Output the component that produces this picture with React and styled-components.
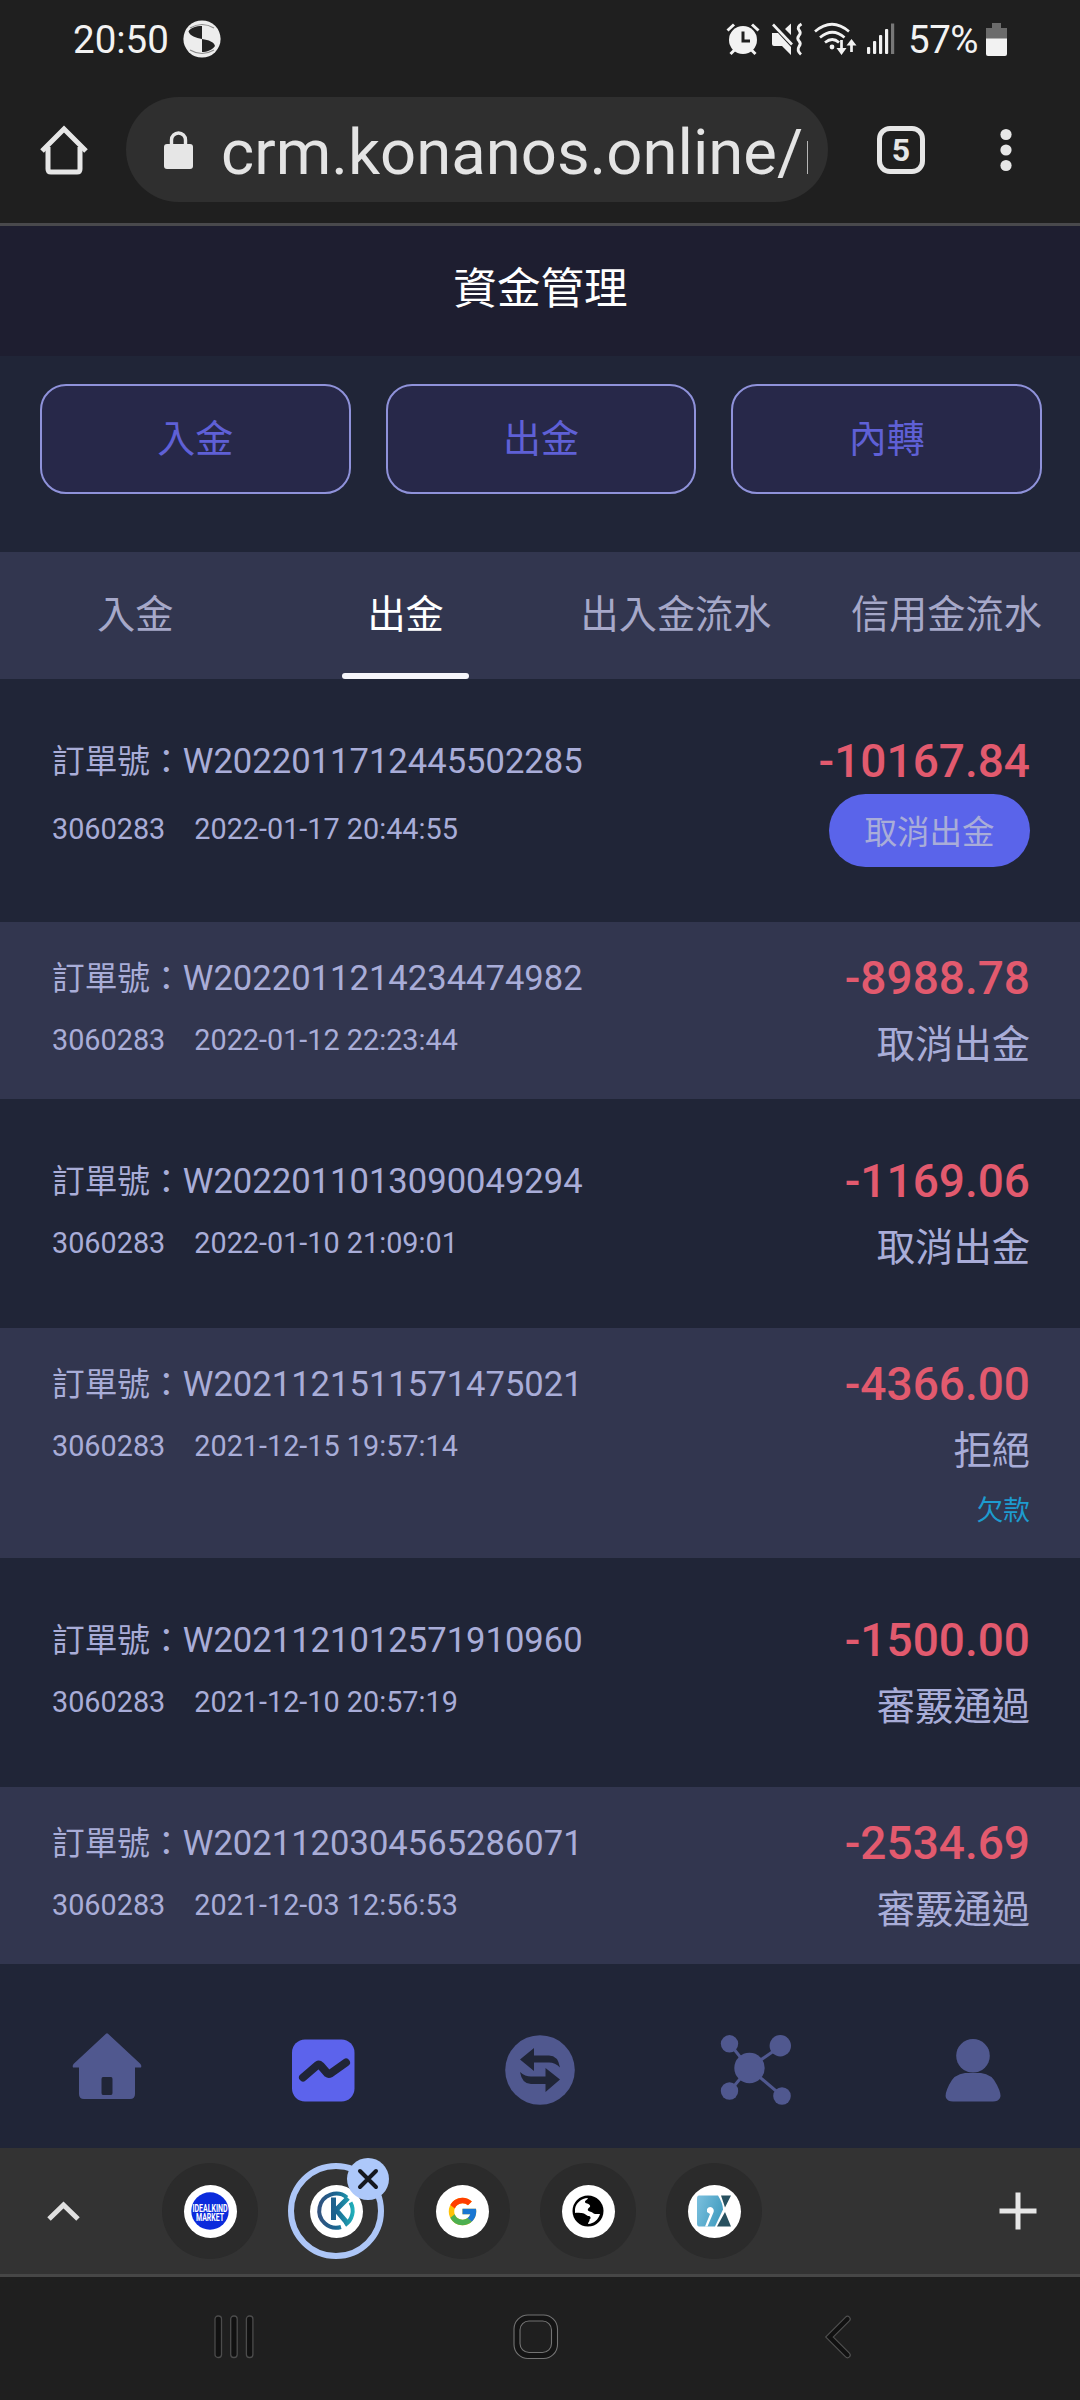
import React, { useState } from 'react'
import styled, { createGlobalStyle } from 'styled-components'
import { FcGoogle } from 'react-icons/fc'

const GlobalStyle = createGlobalStyle`
    * {
        box-sizing: border-box;
    }
    body {
        margin: 0;
        background-color: #1f1f1f;
        font-family: Roboto, 'Noto Sans CJK TC', sans-serif;
    }
    button {
        font-family: inherit;
        padding: 0;
        border: none;
        background: none;
        cursor: pointer;
    }
    svg {
        display: block;
        flex: none;
        overflow: visible;
    }
`

const Screen = styled.div`
    width: 1080px;
    height: 2400px;
    display: flex;
    flex-direction: column;
    overflow: hidden;
    background-color: #202537;
`

/* ---------- phone and browser bars ---------- */

const StatusBar = styled.div`
    height: 78px;
    padding: 0 73px;
    display: flex;
    align-items: center;
    justify-content: space-between;
    background-color: #1f1f1f;
    color: #f2f2f2;
    font-size: 38.5px;
    line-height: 78px;
`

const StatusGroup = styled.div`
    display: flex;
    align-items: center;
    gap: ${(props) => props.$gap || 0}px;
`

const Clock = styled.span`
    width: 110px;
    padding-top: 1px;
`

const Percent = styled.span`
    margin: 0 -3px 0 3px;
    width: 71px;
    padding-top: 1px;
    letter-spacing: -0.5px;
`

const AddressBar = styled.div`
    height: 148px;
    padding: 0 0 2px 40px;
    display: flex;
    align-items: center;
    background-color: #1f1f1f;
    border-bottom: 3px solid #49494c;
`

const UrlPill = styled.div`
    width: 702px;
    height: 105px;
    margin: 0 49px 0 38px;
    padding: 0 20px 0 38px;
    border-radius: 53px;
    display: flex;
    align-items: center;
    background-color: #2f2f2f;
`

const Url = styled.span`
    flex: 1;
    margin-left: 28px;
    overflow: hidden;
    white-space: nowrap;
    color: #e4e4e4;
    font-size: 63.4px;
    line-height: 101px;
    padding-top: 6px;
`

const TabCount = styled.button`
    width: 48px;
    height: 48px;
    margin-right: 75px;
    border: 5px solid #e6e6e6;
    border-radius: 13px;
    color: #e6e6e6;
    font-size: 32px;
    font-weight: 700;
    line-height: 38px;
`

/* ---------- page ---------- */

const Header = styled.header`
    height: 130px;
    display: flex;
    align-items: center;
    justify-content: center;
    background-color: #1e1e30;
    color: #ffffff;
    font-size: 43.6px;
    line-height: 60px;
    padding: 0 0 3px 1px;
`

const Actions = styled.div`
    height: 196px;
    padding: 28px 38px 0 40px;
    display: grid;
    grid-template-columns: repeat(3, 1fr);
    column-gap: 35px;
    align-items: start;
`

const ActionButton = styled.button`
    height: 110px;
    border: 2px solid #8f92da;
    border-radius: 26px;
    background-color: #272849;
    color: #5f60d6;
    font-size: 38px;
    line-height: 105px;
`

const Tabs = styled.nav`
    height: 127px;
    display: grid;
    grid-template-columns: repeat(4, 270.4px);
    background-color: #32364f;
`

const Tab = styled.button`
    display: flex;
    flex-direction: column;
    align-items: center;
    color: ${(props) => (props.$active ? '#ffffff' : '#a6a8c9')};
    font-size: 38.2px;
    line-height: 120px;
    padding-top: 3px;

    &::after {
        content: '';
        width: 127px;
        height: 6px;
        margin-top: -2px;
        border-radius: 3px;
        background-color: ${(props) => (props.$active ? '#f6f6fb' : 'transparent')};
    }
`

const Records = styled.ul`
    list-style: none;
    margin: 0;
    padding: 0;
`

const Record = styled.li`
    padding: 29px 50px 29px 52px;
    color: #a9add8;

    &:nth-child(odd) {
        padding-top: 55px;
        padding-bottom: 55px;
    }
    &:nth-child(even) {
        background-color: #32364f;
    }
`

const Line = styled.div`
    display: flex;
    align-items: center;
    justify-content: space-between;
    height: ${(props) => props.$height}px;
    margin-bottom: ${(props) => props.$gap || 0}px;
`

const OrderNo = styled.span`
    font-size: 34.6px;
    line-height: 50px;
`

const Label = styled.span`
    font-size: 32.7px;
`

const Amount = styled.span`
    color: #e25a6e;
    font-size: 46px;
    font-weight: 500;
    line-height: 50px;
`

const Meta = styled.span`
    display: flex;
    gap: 29px;
    font-size: 28.8px;
    line-height: 40px;
    padding-bottom: ${(props) => (props.$pending ? 3 : 1)}px;
`

const Status = styled.span`
    padding-top: 8px;
    font-size: 38.3px;
    line-height: 50px;
`

const CancelButton = styled.button`
    width: 201px;
    height: 73px;
    border-radius: 37px;
    background-color: #5a64ea;
    color: #a9add8;
    font-size: 32.5px;
    line-height: 77px;
    padding-top: 1px;
`

const Remark = styled.div`
    height: 53px;
    padding-top: 15px;
    text-align: right;
    color: #1d9bcf;
    font-size: 26.8px;
    line-height: 40px;
`

const BottomNav = styled.nav`
    height: 184px;
    padding: 29px 0;
    display: grid;
    grid-template-columns: repeat(5, 1fr);
    align-items: center;
    justify-items: center;
`

const NavButton = styled.button`
    color: ${(props) => (props.$active ? '#5c63ec' : '#50588f')};
    padding-top: 28px;
`

/* ---------- tab strip and system keys ---------- */

const TabStrip = styled.div`
    height: 129px;
    padding: 0 43px 0 46px;
    display: flex;
    align-items: center;
    background-color: #333333;
    border-bottom: 3px solid #474747;
`

const OpenTabs = styled.div`
    flex: 1;
    display: flex;
    gap: 30px;
    margin-left: 82px;
`

const OpenTab = styled.div`
    position: relative;
    width: 96px;
    height: 96px;
    border-radius: 50%;
    display: flex;
    align-items: center;
    justify-content: center;
    background-color: ${(props) => (props.$current ? 'transparent' : '#2b2b2b')};
    border: ${(props) => (props.$current ? '6px solid #adc6f7' : 'none')};
`

const Favicon = styled.span`
    width: 53px;
    height: 53px;
    border-radius: 50%;
    display: flex;
    align-items: center;
    justify-content: center;
    background-color: #ffffff;
`

const CloseBadge = styled.button`
    position: absolute;
    top: -11px;
    right: -11px;
    width: 42px;
    height: 42px;
    border-radius: 50%;
    display: flex;
    align-items: center;
    justify-content: center;
    background-color: #adc8fa;
`

const SystemKeys = styled.div`
    flex: 1;
    padding: 0 228px 3px 214px;
    display: flex;
    align-items: center;
    background-color: #1f1f1f;

    svg:nth-child(2) {
        margin: 0 auto 0 258px;
    }
`

/* ---------- icons ---------- */

const SwirlIcon = () => (
    <svg width='38' height='38' viewBox='0 0 38 38'>
        <circle cx='19' cy='19' r='18.6' fill='#ededed' />
        <path d='M19 6C13 6 7 8 5.5 11.500C7 16 13 18 19 19zM19 19C26 20 31 22 32 26C29 30 24 32 19 32z' fill='#222' />
        <path d='M7 30q12 7 24 0M31 8q-12-7-24 0' fill='none' stroke='#8b8b8b' strokeWidth='1.200' />
    </svg>
)

const AlarmIcon = () => (
    <svg width='34' height='34' viewBox='0 0 34 34' fill='none' stroke='#f2f2f2' strokeWidth='3'>
        <circle cx='17' cy='18' r='14' fill='#f2f2f2' stroke='none' />
        <path d='M1.500 8.500L8 2.500M32.500 8.500L26 2.500M4.500 32l4-4M29.500 32l-4-4' />
        <path d='M17 9.500v9.500h7' stroke='#1f1f1f' />
    </svg>
)

const MuteVibrateIcon = () => (
    <svg width='34' height='34' viewBox='-1 0 34 34'>
        <path d='M1 11h6l13 14v8l-9-9H3q-2 0-2-2zM20 1.500V13l-6-6z' fill='#f2f2f2' />
        <path d='M2 2.500l19 20' stroke='#f2f2f2' strokeWidth='2.600' />
        <path
            d='M30.500 2q-5 3-2.500 6t0 5.500q-2.500 3 0 5.500t0 5.500q-2.500 4 2 8'
            fill='none'
            stroke='#f2f2f2'
            strokeWidth='2.800'
        />
    </svg>
)

const WifiIcon = () => (
    <svg width='43' height='34' viewBox='0 0 43 34' fill='none' stroke='#f2f2f2' strokeWidth='2.700'>
        <path d='M1 9.500q17-14.500 34 0M6 15.500q12.500-10.500 24.500 0M11 20.500q7.500-6 14 0' />
        <circle cx='18' cy='25' r='2.400' fill='#f2f2f2' stroke='none' />
        <path d='M27.500 18v12M37.500 30V20' />
        <path d='M22.500 26h10l-5 7zM32.500 23.500h10l-5-6.500z' fill='#f2f2f2' stroke='none' />
    </svg>
)

const SignalIcon = () => (
    <svg width='28' height='32' viewBox='0 0 28 32' fill='#f2f2f2'>
        <rect x='0' y='24' width='3.200' height='7' rx='1' />
        <rect x='6' y='18' width='3.200' height='13' rx='1' />
        <rect x='12' y='12' width='3.200' height='19' rx='1' />
        <rect x='18' y='6' width='3.200' height='25' rx='1' />
        <rect x='24' y='0.500' width='3.200' height='30.500' fill='#777' />
    </svg>
)

const BatteryIcon = () => (
    <svg width='21' height='33' viewBox='0 0 21 33'>
        <path d='M6 0h9v5h6v11H0V5h6z' fill='#6b6b6b' />
        <path d='M0 15.500h21V31q0 2-2 2H2q-2 0-2-2z' fill='#f2f2f2' />
    </svg>
)

const HomeOutlineIcon = () => (
    <svg width='48' height='50' viewBox='0 0 48 50' fill='none' stroke='#e6e6e6' strokeWidth='5'>
        <path d='M2 26L24 4l22 22' strokeLinejoin='miter' />
        <path d='M8 22v22q0 3 3 3h26q3 0 3-3V22' />
    </svg>
)

const LockIcon = () => (
    <svg width='29' height='38' viewBox='0 0 29 38'>
        <rect x='0' y='13' width='29' height='25' rx='3' fill='#e6e6e6' />
        <path d='M7.500 15V9a7 7 0 0 1 14 0v6' fill='none' stroke='#e6e6e6' strokeWidth='3.400' />
    </svg>
)

const MoreIcon = () => (
    <svg width='12' height='44' viewBox='0 0 12 44' fill='#e6e6e6'>
        <circle cx='6' cy='6.500' r='5.600' />
        <circle cx='6' cy='22' r='5.600' />
        <circle cx='6' cy='37.500' r='5.600' />
    </svg>
)

const HouseIcon = () => (
    <svg width='70' height='70' viewBox='0 0 70 70' fill='currentColor'>
        <path
            fillRule='evenodd'
            d='M33 .8q1-1 2 0L67.500 31q1.500 2 .5 3.500h-6V61q0 5-5 5H11q-5 0-5-5V34.500H0q-1-1.500.500-3.500zM30 44q-1.500 0-1.500 2v14q0 2 1.500 2h8q1.500 0 1.500-2V46q0-2-1.500-2z'
            transform='translate(0 -2)'
        />
    </svg>
)

const ChartIcon = () => (
    <svg width='70' height='70' viewBox='0 0 70 70'>
        <rect x='3' y='4.500' width='62.500' height='62' rx='13' fill='currentColor' />
        <path
            d='M14 42.500L28.500 30q1.500-1 3 .5l7 8q1.200 1 3 0L57 27.500'
            fill='none'
            stroke='#202537'
            strokeWidth='8'
            strokeLinecap='round'
            strokeLinejoin='round'
        />
    </svg>
)

const SwapIcon = () => (
    <svg width='70' height='70' viewBox='0 0 70 70'>
        <circle cx='35' cy='35' r='34.800' fill='currentColor' />
        <path
            d='M15 24.500L29 13v7.500h15q9 0 11 12q-5-5-11-5H29V36zM55 44.500L40.500 57v-8H26q-9 0-11-12q5 4.500 11 4.500h14.500V33z'
            fill='#202537'
        />
    </svg>
)

const NodesIcon = () => (
    <svg width='70' height='70' viewBox='0 0 70 70' fill='currentColor'>
        <path d='M8.500 8.500L28 33L60 11M8.500 56.500L28 33l33 28' fill='none' stroke='currentColor' strokeWidth='3' />
        <circle cx='28.500' cy='33' r='15.200' />
        <circle cx='8.500' cy='8.800' r='8.700' />
        <circle cx='59.300' cy='10.800' r='10.700' />
        <circle cx='8.500' cy='56' r='8.700' />
        <circle cx='61' cy='61' r='8.800' />
    </svg>
)

const UserIcon = () => (
    <svg width='70' height='70' viewBox='-1 0 70 70' fill='currentColor'>
        <circle cx='35' cy='20.800' r='16.800' />
        <path d='M27 38h16q11 1 16 12q5 10 3 13q-2 3.500-7 3.500H15q-5 0-7-3.500q-1.500-4 3-13q5-11 16-12z' />
    </svg>
)

const IdealkindLogo = () => (
    <svg width='38' height='38' viewBox='0 0 38 38'>
        <circle cx='19' cy='19' r='18.700' fill='#0b2bdc' />
        <g fill='#fff' fontFamily='Roboto' fontWeight='700' fontSize='10' textAnchor='middle'>
            <text x='19' y='20' textLength='35' lengthAdjust='spacingAndGlyphs'>IDEALKIND</text>
            <text x='19' y='29' textLength='28' lengthAdjust='spacingAndGlyphs'>MARKET</text>
        </g>
    </svg>
)

const KonanosLogo = () => (
    <svg width='38' height='38' viewBox='0 0 38 38' fill='none' strokeWidth='4'>
        <defs>
            <linearGradient id='konanos' x1='0' y1='0' x2='38' y2='0' gradientUnits='userSpaceOnUse'>
                <stop offset='0' stopColor='#34507c' />
                <stop offset='0.500' stopColor='#1a6490' />
                <stop offset='1' stopColor='#20b5bd' />
            </linearGradient>
        </defs>
        <g stroke='url(#konanos)'>
            <path d='M30 5.500A17 17 0 1 0 24 35' />
            <path d='M33.500 10.500A17 17 0 0 1 28 33' />
            <path d='M16.500 5.500V28' strokeWidth='5' />
            <path d='M31 6L19 18L31 32' strokeWidth='5' />
        </g>
    </svg>
)

const GlobeLogo = () => (
    <svg width='32' height='32' viewBox='0 0 32 32'>
        <circle cx='16' cy='16' r='15.500' fill='#000' />
        <path
            d='M3 14C4 8 9 3.500 16 3c-1 2.500-3 2-3 4s4 1 5 3.500c1 2-3 2.500-2 5c1 1.500 4 1 5 2.500c2 2 4 .5 7 1c-2 6-6 9.500-12 10c0-2 2-2.500 1.500-4.500c2-1 1-3-.5-3.500c-3 0-4-3.500-8-3c-2 0-4-.5-6 0z'
            fill='#fff'
        />
    </svg>
)

const DxLogo = () => (
    <svg width='34' height='32' viewBox='0 0 34 32'>
        <defs>
            <linearGradient id='dx' x1='0' y1='0' x2='1' y2='0.400'>
                <stop offset='0' stopColor='#7cc0de' />
                <stop offset='1' stopColor='#459fc2' />
            </linearGradient>
        </defs>
        <path d='M2 0.500h19q5 8 5 14l-8 17H2q-2 0-2-3v-25q0-3 2-3z' fill='url(#dx)' />
        <path d='M10 14q2-3 5-1.500q3 2 1 6L10.500 31.500H8L13 19l-3-2z' fill='#fff' />
        <path d='M24 0.500h10l-6 12zM28 17l6 14.500H20z' fill='#27505f' />
    </svg>
)

const CloseIcon = () => (
    <svg width='20' height='20' viewBox='0 0 20 20' stroke='#14171f' strokeWidth='4' strokeLinecap='round'>
        <path d='M2 2l16 16M18 2L2 18' />
    </svg>
)

const ChevronUpIcon = () => (
    <svg width='34' height='22' viewBox='0 0 34 22'>
        <path d='M3 19L17.500 5L32 19' fill='none' stroke='#e0e0e0' strokeWidth='5' />
    </svg>
)

const PlusIcon = () => (
    <svg width='38' height='38' viewBox='0 0 38 38' stroke='#e6e6e6' strokeWidth='5'>
        <path d='M19 0.500v37M0.500 19h37' />
    </svg>
)

const RecentsIcon = () => (
    <svg width='41' height='44' viewBox='0 0 41 44' fill='#111' stroke='#4c4c4c' strokeWidth='1.300'>
        <rect x='1' y='1' width='6.500' height='41.500' rx='3' />
        <rect x='16.700' y='1' width='6.500' height='41.500' rx='3' />
        <rect x='32.400' y='1' width='6.500' height='41.500' rx='3' />
    </svg>
)

const HomeKeyIcon = () => (
    <svg width='46' height='46' viewBox='0 0 46 46' stroke='#737373' strokeWidth='1.100'>
        <rect x='1' y='1' width='43.500' height='43.500' rx='14' fill='#141414' />
        <rect x='7' y='7' width='31.500' height='31.500' rx='9' fill='#1f1f1f' />
    </svg>
)

const BackIcon = () => (
    <svg width='27' height='44' viewBox='0 0 27 44' fill='none' strokeLinecap='round' strokeLinejoin='miter'>
        <path d='M22.500 4L4.500 22l18 18' stroke='#4f4f4f' strokeWidth='6.500' />
        <path d='M22.500 4L4.500 22l18 18' stroke='#111' strokeWidth='4.200' />
    </svg>
)

/* ---------- data ---------- */

const actions = ['入金', '出金', '內轉']

const tabs = ['入金', '出金', '出入金流水', '信用金流水']

const records = [
    { id: 'W2022011712445502285', time: '2022-01-17 20:44:55', amount: '-10167.84', status: '取消出金', pending: true },
    { id: 'W2022011214234474982', time: '2022-01-12 22:23:44', amount: '-8988.78', status: '取消出金' },
    { id: 'W2022011013090049294', time: '2022-01-10 21:09:01', amount: '-1169.06', status: '取消出金' },
    { id: 'W2021121511571475021', time: '2021-12-15 19:57:14', amount: '-4366.00', status: '拒絕', remark: '欠款' },
    { id: 'W2021121012571910960', time: '2021-12-10 20:57:19', amount: '-1500.00', status: '審覈通過' },
    { id: 'W2021120304565286071', time: '2021-12-03 12:56:53', amount: '-2534.69', status: '審覈通過' },
]

const navIcons = [HouseIcon, ChartIcon, SwapIcon, NodesIcon, UserIcon]

const openTabs = [
    { name: 'idealkind', icon: <IdealkindLogo /> },
    { name: 'konanos', icon: <KonanosLogo />, current: true },
    { name: 'google', icon: <FcGoogle size={33} /> },
    { name: 'site', icon: <GlobeLogo /> },
    { name: 'dx', icon: <DxLogo /> },
]

const RecordItem = ({ record }) => (
    <Record>
        <Line $height={54} $gap={6}>
            <OrderNo>
                <Label>訂單號：</Label>
                {record.id}
            </OrderNo>
            <Amount>{record.amount}</Amount>
        </Line>
        <Line $height={record.pending ? 73 : 59}>
            <Meta $pending={record.pending}>
                <span>3060283</span>
                <span>{record.time}</span>
            </Meta>
            {record.pending ? (
                <CancelButton>{record.status}</CancelButton>
            ) : (
                <Status>{record.status}</Status>
            )}
        </Line>
        {record.remark && <Remark>{record.remark}</Remark>}
    </Record>
)

const App = () => {
    const [tab, setTab] = useState(1)
    const [page, setPage] = useState(1)

    return (
        <Screen>
            <GlobalStyle />
            <StatusBar>
                <StatusGroup>
                    <Clock>20:50</Clock>
                    <SwirlIcon />
                </StatusGroup>
                <StatusGroup $gap={10}>
                    <AlarmIcon />
                    <MuteVibrateIcon />
                    <WifiIcon />
                    <SignalIcon />
                    <Percent>57%</Percent>
                    <BatteryIcon />
                </StatusGroup>
            </StatusBar>
            <AddressBar>
                <HomeOutlineIcon />
                <UrlPill>
                    <LockIcon />
                    <Url>crm.konanos.online/m</Url>
                </UrlPill>
                <TabCount>5</TabCount>
                <MoreIcon />
            </AddressBar>

            <Header>資金管理</Header>
            <Actions>
                {actions.map((name) => (
                    <ActionButton key={name}>{name}</ActionButton>
                ))}
            </Actions>
            <Tabs>
                {tabs.map((name, i) => (
                    <Tab key={name} $active={tab === i} onClick={() => setTab(i)}>
                        {name}
                    </Tab>
                ))}
            </Tabs>
            <Records>
                {records.map((record) => (
                    <RecordItem key={record.id} record={record} />
                ))}
            </Records>
            <BottomNav>
                {navIcons.map((Icon, i) => (
                    <NavButton key={i} $active={page === i} onClick={() => setPage(i)}>
                        <Icon />
                    </NavButton>
                ))}
            </BottomNav>

            <TabStrip>
                <ChevronUpIcon />
                <OpenTabs>
                    {openTabs.map(({ name, icon, current }) => (
                        <OpenTab key={name} $current={current}>
                            <Favicon>{icon}</Favicon>
                            {current && (
                                <CloseBadge>
                                    <CloseIcon />
                                </CloseBadge>
                            )}
                        </OpenTab>
                    ))}
                </OpenTabs>
                <PlusIcon />
            </TabStrip>
            <SystemKeys>
                <RecentsIcon />
                <HomeKeyIcon />
                <BackIcon />
            </SystemKeys>
        </Screen>
    )
}

export default App
